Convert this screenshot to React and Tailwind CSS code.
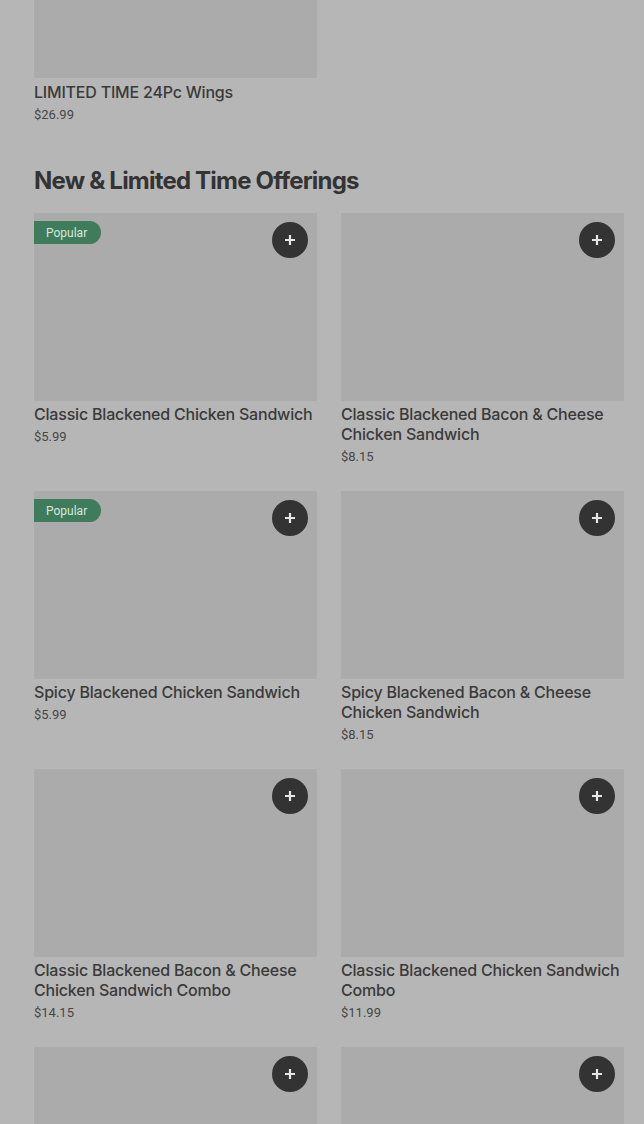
import React from 'react';

const items = [
    { name: 'Classic Blackened Chicken Sandwich', price: '$5.99', popular: true },
    { name: 'Classic Blackened Bacon & Cheese Chicken Sandwich', price: '$8.15' },
    { name: 'Spicy Blackened Chicken Sandwich', price: '$5.99', popular: true },
    { name: 'Spicy Blackened Bacon & Cheese Chicken Sandwich', price: '$8.15' },
    { name: 'Classic Blackened Bacon & Cheese Chicken Sandwich Combo', price: '$14.15' },
    { name: 'Classic Blackened Chicken Sandwich Combo', price: '$11.99' },
    { name: '', price: '' },
    { name: '', price: '' },
];

function PlusButton() {
    return (
        <button className="absolute top-[9px] right-[9px] w-9 h-9 rounded-full bg-[#333333] flex items-center justify-center">
            <svg width="14" height="14" viewBox="0 0 14 14">
                <path d="M7 2v10M2 7h10" stroke="#e6e6e6" strokeWidth="2.2" />
            </svg>
        </button>
    );
}

function Card({ item }) {
    return (
        <div className="flex flex-col">
            <div className="relative h-[188px] bg-[#ababab]">
                {item.popular && (
                    <span className="absolute left-0 top-2 h-[23px] pl-3 pr-[14px] flex items-center rounded-r-full bg-[#3f7c5b] text-[12px] text-[#d9e6de] font-['Roboto',sans-serif]">
                        Popular
                    </span>
                )}
                <PlusButton />
            </div>
            {item.name && (
                <>
                    <p className="mt-[3px] h-auto text-[16px] leading-5 font-medium text-[#3a3a3a] tracking-[-0.2px]">{item.name}</p>
                    <p className="mt-[3px] h-5 text-[13px] leading-5 text-[#474747] font-['Roboto',sans-serif]">{item.price}</p>
                </>
            )}
        </div>
    );
}

export default function App() {
    return (
        <div className="w-[644px] h-[1124px] overflow-hidden bg-[#b6b6b6] pl-[34px] pr-5 font-['Inter',sans-serif]">
            {/* Previous section tail */}
            <div className="w-[283px]">
                <div className="h-[78px] bg-[#ababab]" />
                <p className="mt-1 text-[16px] leading-5 font-medium text-[#3a3a3a] tracking-[-0.2px]">LIMITED TIME 24Pc Wings</p>
                <p className="mt-[3px] h-5 text-[13px] leading-5 text-[#474747] font-['Roboto',sans-serif]">$26.99</p>
            </div>

            <h2 className="mt-[40px] text-[24px] leading-8 font-bold tracking-[-0.8px] text-[#333333]">
                New &amp; Limited Time Offerings
            </h2>

            <div className="mt-4 grid grid-cols-2 gap-x-6 gap-y-6">
                {items.map((item, i) => (
                    <Card key={i} item={item} />
                ))}
            </div>
        </div>
    );
}
